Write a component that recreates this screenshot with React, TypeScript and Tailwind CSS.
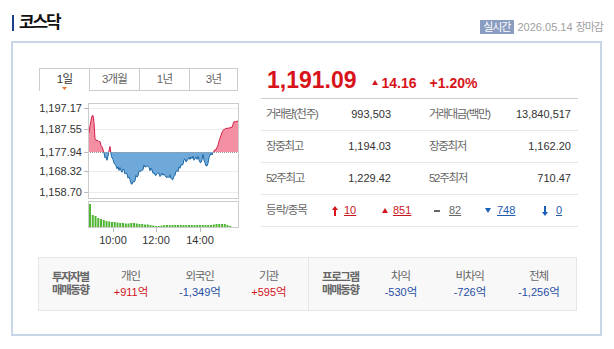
import React from "react";

const KP: [number, number][] = [
  [89, 133], [90, 126], [92, 116], [93, 115], [94, 122], [95, 138], [97, 141], [100, 142],
  [103, 150], [105, 156], [107, 160], [109, 150], [110, 147], [112, 160], [116, 166],
  [122, 170], [128, 176], [131, 182], [133, 184], [136, 177], [141, 170], [147, 164],
  [152, 172], [158, 174], [166, 176], [173, 178], [180, 166], [186, 160], [193, 158],
  [198, 158], [201, 164], [203, 155], [205, 162], [206, 167], [209, 158], [213, 152],
  [217, 148], [220, 138], [223, 130], [228, 128], [232, 127], [234, 122], [238, 121],
];

const BASE = 152;

function pricePoints(): [number, number][] {
  const pts: [number, number][] = [];
  let i = 0;
  for (let x = 89; x <= 238; x += 1) {
    while (i < KP.length - 2 && KP[i + 1][0] < x) i++;
    const [x0, y0] = KP[i];
    const [x1, y1] = KP[i + 1];
    const t = Math.min(1, Math.max(0, (x - x0) / (x1 - x0)));
    let y = y0 + (y1 - y0) * t;
    const n = Math.sin(x * 12.9898) * 43758.5453;
    const r = (n - Math.floor(n)) * 2 - 1;
    if (x > 90 && x < 236) y += r * (y > BASE ? 2.4 : 0.8);
    pts.push([x, y]);
  }
  return pts;
}

const VOL = [
  23, 12, 11, 9, 8, 7, 6, 5.5, 5, 5, 4.5, 4, 4, 3.5, 3.5, 4, 4, 3.5, 3, 3, 2.5, 2.5, 2, 1.5, 1, 1,
  1.5, 2, 2, 2, 2, 2, 2, 2, 2, 2, 2, 2, 2, 2, 2, 2, 2, 2, 2, 2.5, 3, 3, 3, 3, 2, 1,
];

function Chart() {
  const pts = pricePoints();
  const line = pts.map(([x, y], k) => `${k ? "L" : "M"}${x},${y.toFixed(1)}`).join(" ");
  const area = `M89,${BASE} ${pts.map(([x, y]) => `L${x},${y.toFixed(1)}`).join(" ")} L238,${BASE} Z`;
  const grid = [
    { y: 108, label: "1,197.17" },
    { y: 129, label: "1,187.55" },
    { y: 152, label: "1,177.94" },
    { y: 171, label: "1,168.32" },
    { y: 192, label: "1,158.70" },
  ];

  return (
    <svg width="200" height="157" viewBox="39 91 200 157" className="block font-['Liberation_Sans',sans-serif]">
      <defs>
        <clipPath id="up">
          <rect x="88" y="96" width="151" height={BASE - 96} />
        </clipPath>
        <clipPath id="down">
          <rect x="88" y={BASE} width="151" height={199 - BASE} />
        </clipPath>
      </defs>

      {grid.map((g) => (
        <g key={g.label}>
          {g.y !== BASE && <line x1="88" x2="238" y1={g.y + 0.5} y2={g.y + 0.5} stroke="#ececec" />}
          <line x1="84" x2="88" y1={g.y + 0.5} y2={g.y + 0.5} stroke="#bbb" />
          <text x="82" y={g.y + 4} textAnchor="end" fontSize="11" fill="#333">
            {g.label}
          </text>
        </g>
      ))}

      <path d={area} fill="#f48ea2" clipPath="url(#up)" />
      <path d={area} fill="#6fa9da" clipPath="url(#down)" />
      <path d={line} fill="none" stroke="#d2204a" strokeWidth="1" clipPath="url(#up)" />
      <path d={line} fill="none" stroke="#1b67a6" strokeWidth="1" clipPath="url(#down)" />
      <line x1="88" x2="238" y1={BASE + 0.5} y2={BASE + 0.5} stroke="#999" strokeDasharray="1 1" />

      <rect x="88.5" y="103.5" width="150" height="95" fill="none" stroke="#ccc" />

      <rect x="88.5" y="201.5" width="150" height="26" fill="none" stroke="#ccc" />
      {VOL.map((h, k) => (
        <rect key={k} x={89 + k * 2.75} y={227 - h} width="2" height={h} fill="#52b535" />
      ))}

      {[
        { x: 113, t: "10:00" },
        { x: 156, t: "12:00" },
        { x: 200, t: "14:00" },
      ].map((tk) => (
        <g key={tk.t}>
          <line x1={tk.x + 0.5} x2={tk.x + 0.5} y1="228" y2="232" stroke="#bbb" />
          <text x={tk.x} y="244" textAnchor="middle" fontSize="11" fill="#333">
            {tk.t}
          </text>
        </g>
      ))}
    </svg>
  );
}

function Tabs() {
  const tabs = ["1일", "3개월", "1년", "3년"];
  return (
    <div className="flex h-[23px]">
      {tabs.map((t, i) => (
        <div
          key={t}
          className={
            i === 0
              ? "relative w-[50px] h-[23px] border-t border-l border-[#ccc] bg-white flex items-center justify-center text-[11.5px] text-[#333] tracking-[-0.8px]"
              : i === 3
              ? "w-[49px] h-[23px] border-t border-l border-r border-b border-[#ccc] bg-white flex items-center justify-center text-[11.5px] text-[#666] tracking-[-0.8px]"
              : "w-[50px] h-[23px] border-t border-l border-b border-[#ccc] bg-white flex items-center justify-center text-[11.5px] text-[#666] tracking-[-0.8px]"
          }
        >
          {t}
          {i === 0 && (
            <svg width="5" height="3" viewBox="0 0 5 3" className="absolute left-[22px] bottom-[1px]">
              <path d="M0 0H5L2.5 3Z" fill="#e8742a" />
            </svg>
          )}
        </div>
      ))}
    </div>
  );
}

function Row({ l1, v1, l2, v2 }: { l1: string; v1: string; l2: string; v2: string }) {
  return (
    <div className="h-[32px] border-b border-[#e6e6e6] flex items-center pl-[5px]">
      <div className="w-[125px] flex justify-between items-center">
        <span className="text-[11.5px] text-[#666] tracking-[-1.3px]">{l1}</span>
        <span className="text-[11px] text-[#333]">{v1}</span>
      </div>
      <div className="ml-[38px] w-[142px] flex justify-between items-center">
        <span className="text-[11.5px] text-[#666] tracking-[-1.3px]">{l2}</span>
        <span className="text-[11px] text-[#333]">{v2}</span>
      </div>
    </div>
  );
}

function Investors({ title1, title2, items }: { title1: string; title2: string; items: { k: string; v: string; up: boolean }[] }) {
  return (
    <div className="flex items-center h-full">
      <div className="w-[57px] pl-[13px] text-[11.5px] font-bold text-[#666] leading-[13px] tracking-[-1.4px]">
        <div>{title1}</div>
        <div>{title2}</div>
      </div>
      {items.map((it) => (
        <div key={it.k} className="w-[69px] text-center leading-[16px]">
          <div className="text-[11.5px] text-[#666] tracking-[-1.2px]">{it.k}</div>
          <div className={it.up ? "text-[11px] text-[#d3121a]" : "text-[11px] text-[#1f4fa3]"}>
            {it.v}
            <span className="text-[11.5px] tracking-[-1px]">억</span>
          </div>
        </div>
      ))}
    </div>
  );
}

export default function App() {
  return (
    <div className="w-[614px] h-[349px] bg-white text-[#333] font-['Liberation_Sans','Noto_Sans_CJK_KR',sans-serif] overflow-hidden">
      {/* header */}
      <div className="h-[41px] flex justify-between items-start">
        <div className="mt-[14px] ml-[12px] flex items-center">
          <span className="w-[2px] h-[16px] bg-[#1f3f8f]" />
          <span className="ml-[5px] text-[17px] leading-[17px] font-bold text-[#111] tracking-[-2.2px]">코스닥</span>
        </div>
        <div className="mt-[20px] mr-[11px] flex items-center">
          <span className="h-[14px] px-[3px] leading-[14px] text-[11px] text-white bg-[#8a9cc0] tracking-[-1px]">실시간</span>
          <span className="ml-[4px] text-[11px] text-[#a0a0a0] leading-[14px]">
            2026.05.14 <span className="tracking-[-1px]">장마감</span>
          </span>
        </div>
      </div>

      {/* box */}
      <div className="ml-[11px] w-[591px] h-[295px] border-2 border-[#c9d6e8] pt-[25px]">
        <div className="flex h-[180px] pl-[26px]">
          <div className="w-[199px]">
            <Tabs />
            <Chart />
          </div>

          <div className="ml-[23px] w-[317px]">
            <div className="h-[31px] border-b border-[#ccc] pt-[1px] pl-[6px] flex items-baseline text-[#d7141a] font-bold">
              <span className="text-[23px] leading-[23px]">1,191.09</span>
              <span className="ml-[15px] text-[14px] leading-[23px]">
                <svg width="6" height="5" viewBox="0 0 6 5" className="inline-block align-[3px] mr-[4px]">
                  <path d="M3 0L6 5H0Z" fill="#d7141a" />
                </svg>
                14.16
              </span>
              <span className="ml-[13px] text-[14px] leading-[23px]">+1.20%</span>
            </div>
            <Row l1="거래량(천주)" v1="993,503" l2="거래대금(백만)" v2="13,840,517" />
            <Row l1="장중최고" v1="1,194.03" l2="장중최저" v2="1,162.20" />
            <Row l1="52주최고" v1="1,229.42" l2="52주최저" v2="710.47" />
            <div className="h-[32px] border-b border-[#e6e6e6] flex items-center pl-[5px] text-[11px]">
              <span className="w-[66px] text-[11.5px] text-[#666] tracking-[-0.9px]">등락/종목</span>
              <span className="w-[50px] flex items-center">
                <svg width="6" height="10" viewBox="0 0 6 10">
                  <path d="M3 0L6 4H4V10H2V4H0Z" fill="#d9141b" />
                </svg>
                <span className="ml-[6px] underline text-[#c8161d]">10</span>
              </span>
              <span className="w-[52px] flex items-center">
                <svg width="6" height="5" viewBox="0 0 6 5">
                  <path d="M3 0L6 5H0Z" fill="#d9141b" />
                </svg>
                <span className="ml-[5px] underline text-[#c8161d]">851</span>
              </span>
              <span className="w-[51px] flex items-center">
                <span className="w-[6px] h-[2px] bg-[#666]" />
                <span className="ml-[9px] underline text-[#666]">82</span>
              </span>
              <span className="w-[57px] flex items-center">
                <svg width="6" height="5" viewBox="0 0 6 5">
                  <path d="M0 0H6L3 5Z" fill="#1b5eb7" />
                </svg>
                <span className="ml-[6px] underline text-[#1e5bb0]">748</span>
              </span>
              <span className="flex items-center">
                <svg width="6" height="10" viewBox="0 0 6 10">
                  <path d="M3 10L6 6H4V0H2V6H0Z" fill="#1b5eb7" />
                </svg>
                <span className="ml-[8px] underline text-[#1e5bb0]">0</span>
              </span>
            </div>
          </div>
        </div>

        <div className="mt-[9px] ml-[25px] w-[539px] h-[54px] flex border border-[#e6e6e6] bg-[#f8f8f8]">
          <div className="w-[270px] border-r border-[#e6e6e6]">
            <Investors
              title1="투자자별"
              title2="매매동향"
              items={[
                { k: "개인", v: "+911", up: true },
                { k: "외국인", v: "-1,349", up: false },
                { k: "기관", v: "+595", up: true },
              ]}
            />
          </div>
          <div className="flex-1">
            <Investors
              title1="프로그램"
              title2="매매동향"
              items={[
                { k: "차익", v: "-530", up: false },
                { k: "비차익", v: "-726", up: false },
                { k: "전체", v: "-1,256", up: false },
              ]}
            />
          </div>
        </div>
      </div>
    </div>
  );
}
